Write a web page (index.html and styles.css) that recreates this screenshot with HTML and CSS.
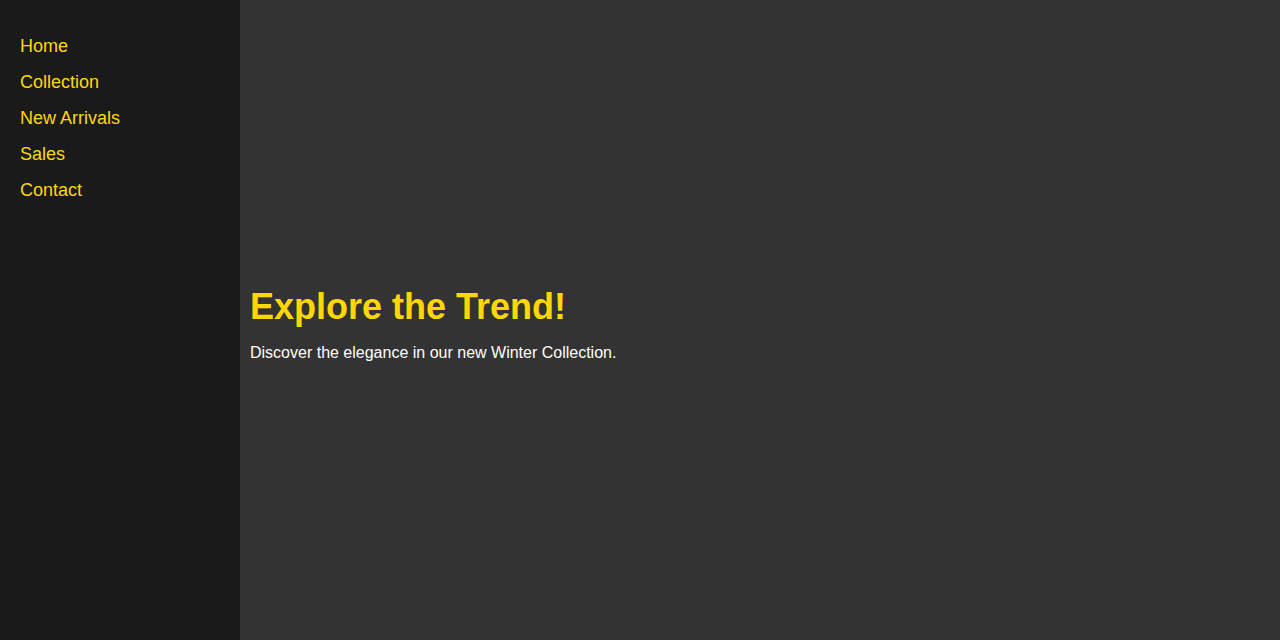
FILE: index.html
```html
<!DOCTYPE html>
<html lang="en">
<head>
<meta charset="utf-8">
<title>Explore the Trend</title>
<link rel="stylesheet" href="styles.css">
</head>
<body>
<div class="layout">
  <nav class="sidebar">
    <ul class="nav-list">
      <li><a href="#" class="nav-link">Home</a></li>
      <li><a href="#" class="nav-link">Collection</a></li>
      <li><a href="#" class="nav-link">New Arrivals</a></li>
      <li><a href="#" class="nav-link">Sales</a></li>
      <li><a href="#" class="nav-link">Contact</a></li>
    </ul>
  </nav>
  <main class="main">
    <section class="hero">
      <h1 class="hero-title">Explore the Trend!</h1>
      <p class="hero-text">Discover the elegance in our new Winter Collection.</p>
    </section>
  </main>
</div>
</body>
</html>
```
FILE: styles.css
```css
html {
  overflow-y: scroll;
}
html, body {
  margin: 0;
  padding: 0;
}
body {
  font-family: "Liberation Sans", Arial, sans-serif;
  background: #333333;
  color: #ffffff;
}
.layout {
  display: flex;
  min-height: 100vh;
}
.sidebar {
  width: 240px;
  flex: 0 0 240px;
  box-sizing: border-box;
  background: #1a1a1a;
  padding: 28px 20px 20px;
}
.nav-list {
  list-style: none;
  margin: 0;
  padding: 0;
}
.nav-list li {
  padding: 8px 0;
}
.nav-link {
  display: block;
  color: #ffd700;
  text-decoration: none;
  font-size: 18px;
  line-height: 20px;
}
.main {
  flex: 1;
  padding: 20px 10px;
  height: 100vh;
  display: flex;
  flex-direction: column;
  justify-content: center;
}
.hero-title {
  margin: 0 0 16px;
  font-size: 36px;
  color: #ffd700;
}
.hero-text {
  margin: 0 0 32px;
  font-size: 16px;
  color: #ffffff;
}
```
